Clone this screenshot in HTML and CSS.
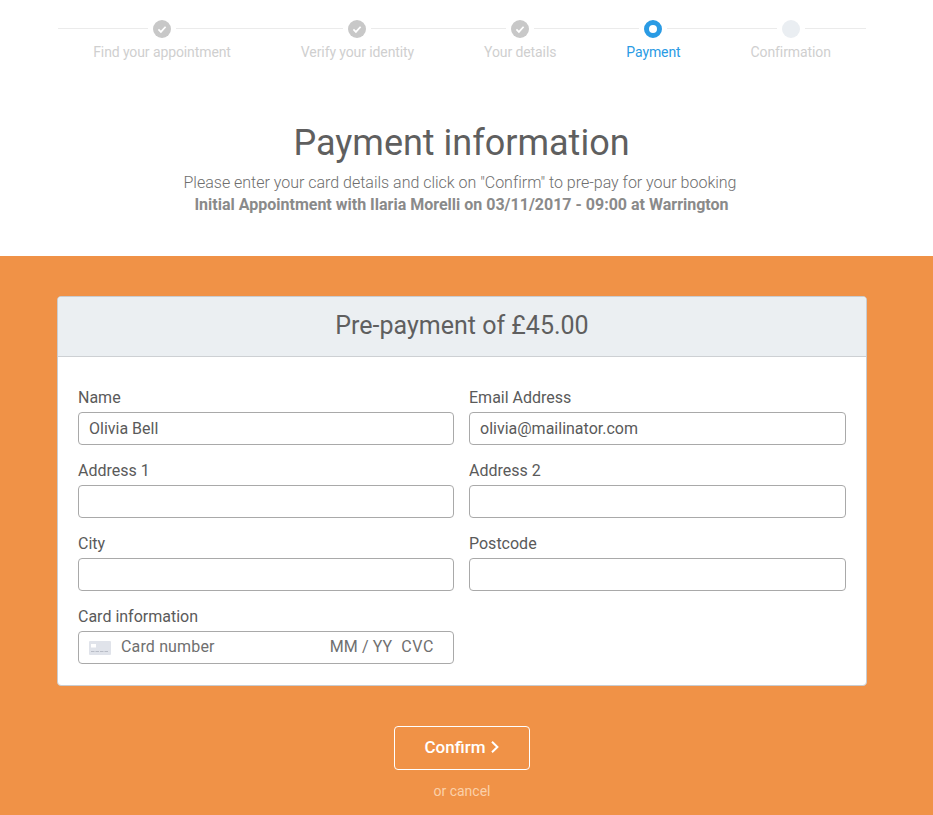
FILE: index.html
```html
<!DOCTYPE html>
<html lang="en">
<head>
<meta charset="utf-8">
<title>Payment information</title>
<link rel="stylesheet" href="styles.css">
</head>
<body>
<header class="top">
  <ol class="steps">
    <li class="step done"><div class="track"><span class="dot"><svg viewBox="0 0 18 18" class="tick"><path d="M5.4 9.4l2.5 2.5 4.7-5.2"/></svg></span></div><span class="step-label">Find your appointment</span></li>
    <li class="step done"><div class="track"><span class="dot"><svg viewBox="0 0 18 18" class="tick"><path d="M5.4 9.4l2.5 2.5 4.7-5.2"/></svg></span></div><span class="step-label">Verify your identity</span></li>
    <li class="step done"><div class="track"><span class="dot"><svg viewBox="0 0 18 18" class="tick"><path d="M5.4 9.4l2.5 2.5 4.7-5.2"/></svg></span></div><span class="step-label">Your details</span></li>
    <li class="step active"><div class="track"><span class="dot"></span></div><span class="step-label">Payment</span></li>
    <li class="step"><div class="track"><span class="dot"></span></div><span class="step-label">Confirmation</span></li>
  </ol>
  <h1 class="title">Payment information</h1>
  <p class="intro">Please enter your card details and click on "Confirm" to pre-pay for your booking</p>
  <p class="booking">Initial Appointment with Ilaria Morelli on 03/11/2017 - 09:00 at Warrington</p>
</header>
<main class="band">
  <section class="card">
    <h2 class="card-head">Pre-payment of £45.00</h2>
    <form class="card-body">
      <div class="field"><label class="label">Name</label><div class="input">Olivia Bell</div></div>
      <div class="field"><label class="label">Email Address</label><div class="input">olivia@mailinator.com</div></div>
      <div class="field"><label class="label">Address 1</label><div class="input"></div></div>
      <div class="field"><label class="label">Address 2</label><div class="input"></div></div>
      <div class="field"><label class="label">City</label><div class="input"></div></div>
      <div class="field"><label class="label">Postcode</label><div class="input"></div></div>
      <div class="field"><label class="label">Card information</label>
        <div class="input card-input">
          <svg class="card-icon" viewBox="0 0 22 14"><rect width="22" height="14" rx="1" fill="#e0e3ea"/><rect x="2" y="3" width="5" height="3.5" fill="#fff"/><path d="M2 10.5h18" stroke="#b9bdc7" stroke-dasharray="3.5 1" fill="none"/></svg>
          <span class="card-number">Card number</span>
          <span class="card-expiry">MM / YY</span>
          <span class="card-cvc">CVC</span>
        </div>
      </div>
    </form>
  </section>
  <button class="confirm" type="button"><span class="confirm-text">Confirm</span><svg class="chevron" viewBox="0 0 8 12"><path d="M1 .8l5.4 5.2L1 11.2"/></svg></button>
  <a class="cancel">or cancel</a>
</main>
</body>
</html>
```
FILE: styles.css
```css
*, *::before { box-sizing: border-box; }
html, body { margin: 0; padding: 0; }
body { font-family: Roboto, "Liberation Sans", sans-serif; background: #fff; color: #555; overflow: hidden; height: 815px; }

.top { height: 256px; padding: 20px 9px 0 0; text-align: center; }
.steps { display: flex; justify-content: center; margin: 0; padding: 0; list-style: none; }
.step { display: flex; flex-direction: column; align-items: center; }
.track { display: flex; justify-content: center; width: 100%; height: 19px; background: linear-gradient(#ebebeb, #ebebeb) 0 8px / 100% 1px no-repeat; }
.dot { width: 28px; height: 18px; background: #fff; display: flex; justify-content: center; position: relative; }
.dot::before { content: ""; width: 18px; height: 18px; border-radius: 50%; background: #eaeef2; }
.step.done .dot::before { background: #c8c8c8; }
.step.active .dot::before { background: #fff; border: 5px solid #2a9be4; }
.tick { position: absolute; left: 5px; top: 0; width: 18px; height: 18px; fill: none; stroke: #fff; stroke-width: 1.7; }
.step-label { padding: 0 35px; margin-top: 5px; font-size: 14px; line-height: 16px; letter-spacing: -0.1px; white-space: nowrap; color: #cfcfcf; }
.step.active .step-label { color: #2a9be4; }

.title { margin: 61px 1px 0 0; font-size: 36px; line-height: 44px; font-weight: 400; color: #5f5f5f; }
.intro { margin: 7px 4px 0 0; font-size: 16px; line-height: 22px; font-weight: 300; letter-spacing: -0.01px; color: #6e6e6e; }
.booking { margin: 0 1px 0 0; font-size: 16px; line-height: 21px; font-weight: 700; color: #8a8a8a; }

.band { height: 559px; background: #f09247; padding: 40px 9px 0 0; display: flex; flex-direction: column; align-items: center; }
.card { width: 810px; height: 390px; background: #fff; border: 1px solid #c9ccd0; border-radius: 4px; overflow: hidden; }
.card-head { margin: 0; height: 60px; background: #ebeff2; border-bottom: 1px solid #cdd0d3; font-size: 25px; line-height: 57px; font-weight: 400; text-align: center; color: #5f5f5f; }
.card-body { display: grid; grid-template-columns: 376px 377px; column-gap: 15px; row-gap: 15px; padding: 30px 20px 0; align-content: start; }
.field { display: flex; flex-direction: column; }
.label { font-size: 16px; line-height: 22px; height: 25px; color: #5a5a5a; }
.input { height: 33px; border: 1px solid #a9a9a9; border-radius: 4px; padding: 0 10px; font-size: 16px; line-height: 31px; color: #5a5a5a; background: #fff; }
.card-input { display: flex; align-items: center; color: #6f6f6f; padding-bottom: 2px; }
.card-icon { width: 22px; height: 14px; flex: none; margin: 2px 10px 0 0; }
.card-number { flex: 1; letter-spacing: 0.15px; }
.card-expiry { margin-right: 9px; letter-spacing: 0.1px; }
.card-cvc { margin-right: 9px; letter-spacing: 0.6px; }

.confirm { margin-top: 40px; width: 136px; height: 44px; background: transparent; border: 1px solid #fff; border-radius: 4px; color: #fff; font: 500 17px Roboto, sans-serif; display: flex; align-items: center; justify-content: center; gap: 6px; padding: 0 0 2px; }
.chevron { width: 8px; height: 12px; fill: none; stroke: #fff; stroke-width: 2; }
.cancel { margin-top: 13px; font-size: 14px; line-height: 16px; color: #fbd0a9; }
```
